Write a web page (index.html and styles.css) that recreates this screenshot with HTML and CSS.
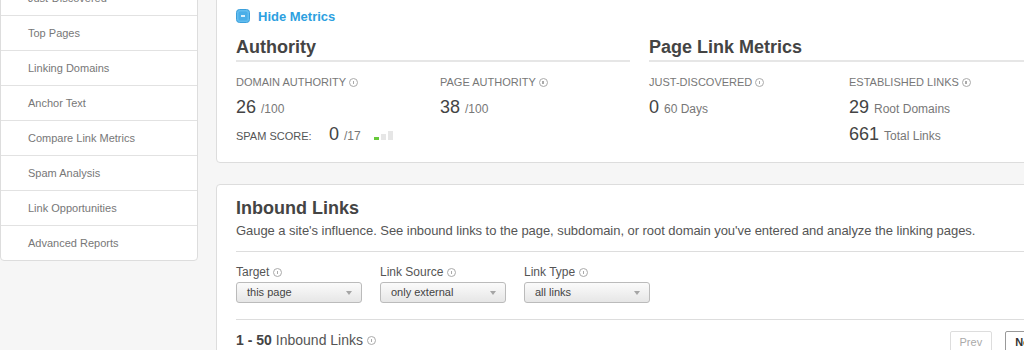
FILE: index.html
```html
<!DOCTYPE html>
<html lang="en">

<head>
  <meta charset="UTF-8">
  <meta name="viewport" content="width=device-width, initial-scale=1.0">
  <title>Open Site Explorer - Inbound Links</title>
  <link rel="stylesheet" href="styles.css">
</head>

<body>

  <div class="page">
    <aside class="sidenav">
      <ul>
        <li><a href="#">Just-Discovered</a></li>
        <li><a href="#">Top Pages</a></li>
        <li><a href="#">Linking Domains</a></li>
        <li><a href="#">Anchor Text</a></li>
        <li><a href="#">Compare Link Metrics</a></li>
        <li><a href="#">Spam Analysis</a></li>
        <li><a href="#">Link Opportunities</a></li>
        <li><a href="#">Advanced Reports</a></li>
      </ul>
    </aside>

    <main class="main">
      <section class="panel metrics-panel">
        <a class="toggle" href="#">
          <svg class="toggle-icon" width="14" height="14" viewBox="0 0 14 14" aria-hidden="true">
            <rect x="0.5" y="0.5" width="13" height="13" rx="3" fill="#62bdef" stroke="#3b9fdb" />
            <rect x="2.5" y="2.5" width="9" height="9" rx="1.5" fill="#4aaee8" />
            <rect x="5" y="6.2" width="4" height="1.6" fill="#ffffff" />
          </svg>
          Hide Metrics
        </a>

        <div class="metric-groups">
          <div class="group">
            <h2>Authority</h2>
            <div class="metric-grid authority">
              <div class="metric">
                <div class="label">DOMAIN AUTHORITY <span class="info"></span></div>
                <div class="value">26 <small>/100</small></div>
              </div>
              <div class="metric">
                <div class="label">PAGE AUTHORITY <span class="info"></span></div>
                <div class="value">38 <small>/100</small></div>
              </div>
            </div>
            <div class="spam">
              <span class="spam-label">SPAM SCORE:</span>
              <span class="value">0 <small>/17</small></span>
              <span class="spam-bars">
                <span class="bar bar-1"></span>
                <span class="bar bar-2"></span>
                <span class="bar bar-3"></span>
              </span>
            </div>
          </div>

          <div class="group">
            <h2>Page Link Metrics</h2>
            <div class="metric-grid links">
              <div class="metric">
                <div class="label">JUST-DISCOVERED <span class="info"></span></div>
                <div class="value">0 <small>60 Days</small></div>
              </div>
              <div class="metric">
                <div class="label">ESTABLISHED LINKS <span class="info"></span></div>
                <div class="value">29 <small>Root Domains</small></div>
                <div class="value second">661 <small>Total Links</small></div>
              </div>
            </div>
          </div>
        </div>
      </section>

      <section class="panel links-panel">
        <h2>Inbound Links</h2>
        <p class="intro">Gauge a site's influence. See inbound links to the page, subdomain, or root domain you've entered and analyze the linking pages.</p>

        <div class="filters">
          <div class="filter">
            <div class="filter-label">Target <span class="info"></span></div>
            <div class="select">this page</div>
          </div>
          <div class="filter">
            <div class="filter-label">Link Source <span class="info"></span></div>
            <div class="select">only external</div>
          </div>
          <div class="filter">
            <div class="filter-label">Link Type <span class="info"></span></div>
            <div class="select">all links</div>
          </div>
        </div>

        <div class="results-bar">
          <div class="count"><b>1 - 50</b> Inbound Links <span class="info"></span></div>
          <div class="pager">
            <button class="pager-btn disabled">Prev</button>
            <button class="pager-btn">Next</button>
          </div>
        </div>
      </section>
    </main>
  </div>

</body>

</html>
```

FILE: styles.css
```css
body {
  margin: 0;
  padding: 0;
  background: #f6f6f6;
  font-family: 'Liberation Sans', Arial, sans-serif;
  color: #444;
  overflow: hidden;
}

.page {
  display: flex;
  align-items: flex-start;
  gap: 18px;
  width: 1069px;
  margin-top: -20px;
}

/* left navigation */

.sidenav {
  width: 196px;
  flex: none;
  background: white;
  border: 1px solid #ddd;
  border-radius: 0 0 4px 4px;
}

.sidenav ul {
  list-style: none;
  margin: 0;
  padding: 0;
}

.sidenav li {
  border-bottom: 1px solid #e2e2e2;
}

.sidenav li:last-child {
  border-bottom: none;
}

.sidenav a {
  display: block;
  height: 34px;
  line-height: 34px;
  padding-left: 27px;
  font-size: 11px;
  color: #777;
  text-decoration: none;
}

/* main column */

.main {
  flex: 1;
  display: flex;
  flex-direction: column;
  gap: 21px;
}

.panel {
  background: white;
  border: 1px solid #ddd;
  border-radius: 4px;
  padding: 0 19px;
}

.metrics-panel {
  padding-top: 27px;
  padding-bottom: 17px;
}

.toggle {
  display: flex;
  align-items: center;
  gap: 8px;
  height: 16px;
  font-size: 13px;
  font-weight: bold;
  color: #2d9fe0;
  text-decoration: none;
}

.toggle-icon {
  display: block;
}

.metric-groups {
  display: grid;
  grid-template-columns: 394px 1fr;
  column-gap: 19px;
  margin-top: 12px;
}

h2 {
  margin: 0;
  font-size: 18px;
  line-height: 22px;
  font-weight: bold;
  color: #444;
}

.group h2 {
  padding-bottom: 2px;
  border-bottom: 2px solid #e6e6e6;
}

.metric-grid {
  display: grid;
  margin-top: 13px;
}

.metric-grid.authority {
  grid-template-columns: 204px 1fr;
}

.metric-grid.links {
  grid-template-columns: 200px 1fr;
}

.label {
  font-size: 11px;
  line-height: 14px;
  color: #777;
  display: flex;
  align-items: center;
  gap: 3px;
}

.value {
  margin-top: 7px;
  font-size: 18px;
  line-height: 22px;
  color: #444;
}

.value small {
  font-size: 12px;
  line-height: 10px;
  color: #777;
}

.value.second {
  margin-top: 5px;
}

.info {
  display: inline-block;
  width: 9px;
  height: 9px;
  border: 1px solid #aaa;
  border-radius: 50%;
  box-sizing: border-box;
  position: relative;
  vertical-align: middle;
}

.info::after {
  content: '';
  position: absolute;
  left: 2.5px;
  top: 2px;
  width: 1.5px;
  height: 3.5px;
  background: #aaa;
}

.spam {
  display: flex;
  align-items: baseline;
  height: 22px;
  margin-top: 5px;
}

.spam-label {
  width: 93px;
  font-size: 11px;
  line-height: 14px;
  color: #555;
}

.spam .value {
  margin-top: 0;
}

.spam-bars {
  display: inline-flex;
  align-items: flex-end;
  gap: 2px;
  height: 9px;
  margin-left: 13px;
}

.bar {
  display: block;
  width: 5px;
  background: #e6e6e6;
}

.bar-1 {
  height: 3px;
  background: #66c93a;
}

.bar-2 {
  height: 6px;
}

.bar-3 {
  height: 9px;
}

/* inbound links panel */

.links-panel {
  padding-top: 12px;
  padding-bottom: 20px;
}

.intro {
  margin: 3px 0 0;
  font-size: 13px;
  line-height: 17px;
  letter-spacing: -0.05px;
  color: #555;
  padding-bottom: 12px;
  border-bottom: 1px solid #ddd;
}

.filters {
  display: flex;
  gap: 18px;
  padding: 13px 0 16px;
  border-bottom: 1px solid #ddd;
}

.filter-label {
  font-size: 12px;
  line-height: 14px;
  color: #555;
  display: flex;
  align-items: center;
  gap: 4px;
}

.select {
  position: relative;
  height: 19px;
  line-height: 19px;
  margin-top: 3px;
  padding-left: 10px;
  width: 114px;
  font-size: 11px;
  color: #444;
  background: linear-gradient(#fbfbfb, #e6e6e6);
  border: 1px solid #bbb;
  border-radius: 3px;
}

.select::after {
  content: '';
  position: absolute;
  right: 9px;
  top: 8px;
  border-left: 3.5px solid transparent;
  border-right: 3.5px solid transparent;
  border-top: 4px solid #a5a5a5;
}

.results-bar {
  display: flex;
  justify-content: space-between;
  align-items: flex-start;
  padding-top: 11px;
}

.count {
  font-size: 14px;
  line-height: 18px;
  color: #555;
  display: flex;
  align-items: center;
  gap: 4px;
}

.count b {
  color: #444;
}

.pager {
  display: flex;
  gap: 13px;
}

.pager-btn {
  font-family: inherit;
  font-size: 11px;
  height: 22px;
  padding: 0 9px;
  background: white;
  border: 1px solid #999;
  border-radius: 2px;
  color: #333;
  font-weight: bold;
}

.pager-btn.disabled {
  border-color: #ddd;
  color: #aaa;
  font-weight: normal;
}
```
